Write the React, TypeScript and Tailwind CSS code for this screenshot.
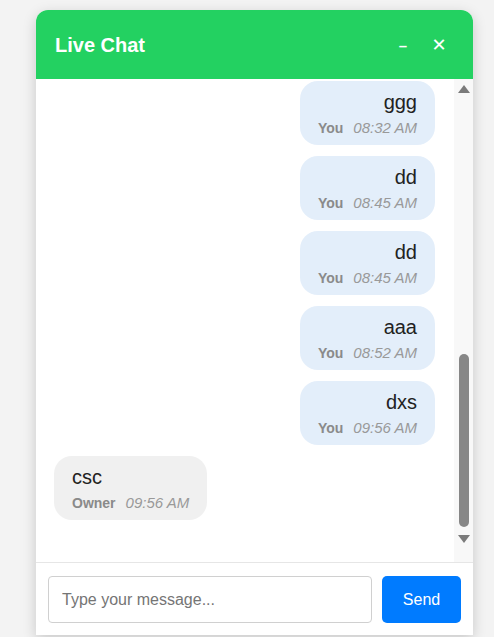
import { useLayoutEffect, useRef } from "react";

type Msg = { from: "You" | "Owner"; text: string; time: string };

const messages: Msg[] = [
  { from: "Owner", text: "hello", time: "08:01 AM" },
  { from: "You", text: "hi", time: "08:02 AM" },
  { from: "You", text: "test", time: "08:05 AM" },
  { from: "Owner", text: "ok", time: "08:06 AM" },
  { from: "You", text: "abc", time: "08:10 AM" },
  { from: "You", text: "xyz", time: "08:12 AM" },
  { from: "Owner", text: "yes", time: "08:14 AM" },
  { from: "You", text: "123", time: "08:20 AM" },
  { from: "You", text: "hey", time: "08:25 AM" },
  { from: "You", text: "sss", time: "08:30 AM" },
  { from: "You", text: "ggg", time: "08:32 AM" },
  { from: "You", text: "dd", time: "08:45 AM" },
  { from: "You", text: "dd", time: "08:45 AM" },
  { from: "You", text: "aaa", time: "08:52 AM" },
  { from: "You", text: "dxs", time: "09:56 AM" },
  { from: "Owner", text: "csc", time: "09:56 AM" },
];

function Bubble({ msg }: { msg: Msg }) {
  const mine = msg.from === "You";
  return (
    <div className={mine ? "flex justify-end" : "flex justify-start"}>
      <div
        className={
          mine
            ? "rounded-[18px] bg-[#e3eefa] px-[18px] pt-[10px] pb-[9px] text-right"
            : "rounded-[18px] bg-[#f0f0f0] px-[18px] pt-[10px] pb-[9px] text-left"
        }
      >
        <p className="text-[20px] leading-[23px] text-[#222]">{msg.text}</p>
        <p
          className={
            mine
              ? "mt-[5px] flex h-[17px] items-baseline justify-end whitespace-nowrap text-[15px] leading-[17px]"
              : "mt-[5px] flex h-[17px] items-baseline justify-start whitespace-nowrap text-[15px] leading-[17px]"
          }
        >
          <span className="text-[14px] font-bold text-[#8a8a8a]">{msg.from}</span>
          <span className="ml-[10px] italic text-[#999]">{msg.time}</span>
        </p>
      </div>
    </div>
  );
}

function Arrow({ down }: { down?: boolean }) {
  return (
    <div className="flex h-[20px] shrink-0 items-center justify-center">
      <svg width="12" height="8" viewBox="0 0 12 8">
        <polygon points={down ? "0,0 12,0 6,8" : "6,0 12,8 0,8"} fill="#7b7b7b" />
      </svg>
    </div>
  );
}

export default function App() {
  const listRef = useRef<HTMLDivElement>(null);

  useLayoutEffect(() => {
    if (listRef.current) listRef.current.scrollTop = listRef.current.scrollHeight;
  }, []);

  return (
    <div className="h-[637px] overflow-hidden bg-[#f3f3f3] pt-[10px] pl-[36px] font-['Liberation_Sans',Arial,sans-serif]">
      <div className="flex h-[625px] w-[437px] flex-col overflow-hidden rounded-t-xl bg-white shadow-[0_4px_14px_rgba(0,0,0,0.18)]">
        <div className="flex h-[69px] shrink-0 items-center justify-between bg-[#23d161] pl-[19px] pr-[22px] text-white">
          <h1 className="text-[20px] font-bold">Live Chat</h1>
          <div className="flex items-center gap-3">
            <button className="mt-[2px] w-6 text-center text-[15px] font-bold leading-none">–</button>
            <button className="w-6 text-center text-[18px] font-bold leading-none font-['DejaVu_Sans',sans-serif]">✕</button>
          </div>
        </div>

        <div className="flex min-h-0 flex-1">
          <div
            ref={listRef}
            className="flex flex-1 flex-col gap-[11px] overflow-y-scroll pl-[18px] pr-[19px] pt-[15px] pb-[42px] [scrollbar-width:none]"
          >
            {messages.map((m, i) => (
              <Bubble key={i} msg={m} />
            ))}
          </div>
          <div className="flex w-[19px] shrink-0 flex-col bg-[#f8f8f8]">
            <Arrow />
            <div className="flex flex-1 flex-col items-center justify-end pb-[2px]">
              <div className="h-[173px] w-[10px] rounded-full bg-[#878787]" />
            </div>
            <Arrow down />
            <div className="h-[13px] shrink-0" />
          </div>
        </div>

        <div className="flex shrink-0 gap-[10px] border-t border-[#e6e6e6] px-3 pt-[13px] pb-3">
          <input
            className="h-[47px] min-w-0 flex-1 rounded border border-[#d0d0d0] px-[13px] text-[16px] text-[#333] outline-none placeholder:text-[#757575]"
            placeholder="Type your message..."
          />
          <button className="h-[47px] w-[79px] rounded-[5px] bg-[#007bff] text-[16px] text-white">Send</button>
        </div>
      </div>
    </div>
  );
}
